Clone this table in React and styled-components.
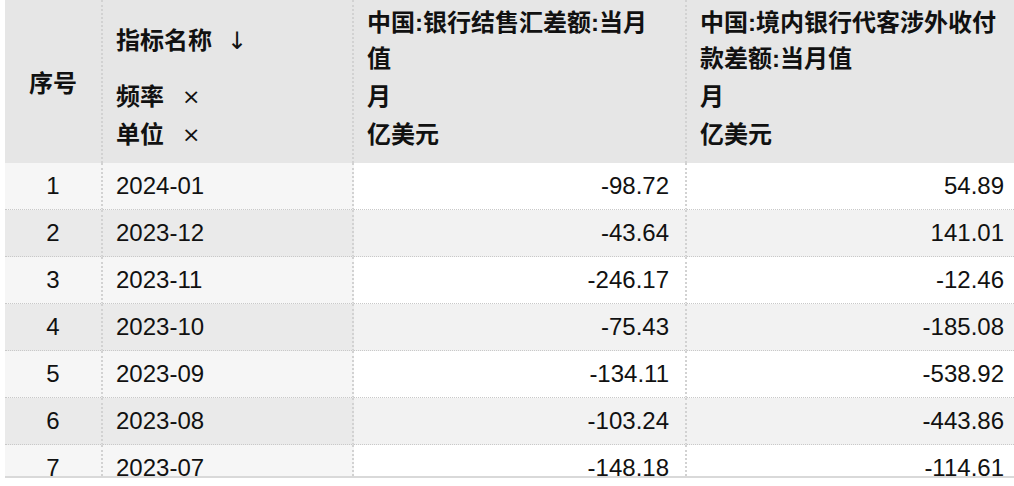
import React from 'react';
import styled, { createGlobalStyle } from 'styled-components';

const GlobalStyle = createGlobalStyle`
  body {
    margin: 0;
    background: #ffffff;
    font-family: 'Liberation Sans', 'Noto Sans CJK SC', sans-serif;
    color: #111111;
  }
`;

const Page = styled.div`
  padding-left: 5px;
  width: 1009px;
`;

const Viewport = styled.div`
  height: 476px;
  overflow: hidden;
  border-bottom: 2px solid #d9d9d9;
`;

const Grid = styled.div`
  display: grid;
  grid-template-columns: 98px 251px 333px 333px;
  width: 1015px;
`;

const HeadCell = styled.div`
  box-sizing: border-box;
  height: 163px;
  background: #e6e6e6;
  border-right: ${p => (p.$last ? 'none' : '2px dotted #d2d2d2')};
  padding: 4px 0 9px 13px;
  display: flex;
  flex-direction: column;
  font-size: 24px;
  font-weight: 700;
  color: #111;
`;

const IndexHead = styled(HeadCell)`
  padding: 0;
  align-items: center;
  justify-content: center;
`;

const NameBlock = styled.div`
  height: 74px;
  display: flex;
  align-items: center;
  line-height: 36px;
  max-width: 300px;
`;

const MetaRow = styled.div`
  height: 38px;
  line-height: 38px;
  display: flex;
  align-items: center;
`;

const Mark = styled.span`
  font-weight: 400;
  margin-left: ${p => p.$gap || 18}px;
  font-family: 'DejaVu Sans', 'Liberation Sans', sans-serif;
  font-size: ${p => p.$size || 22}px;
`;

const Cell = styled.div`
  box-sizing: border-box;
  height: 47px;
  display: flex;
  align-items: center;
  font-size: 24px;
  color: #111;
  border-bottom: 1px dotted #c9c9c9;
  border-right: ${p => (p.$last ? 'none' : '2px dotted #d2d2d2')};
  background: ${p =>
    p.$side ? (p.$even ? '#eaeaea' : '#f6f6f6') : p.$even ? '#f2f2f2' : '#ffffff'};
  justify-content: ${p => p.$align || 'flex-start'};
  padding: ${p => (p.$align === 'flex-end' ? '0 16px 0 0' : p.$align === 'center' ? '0' : '0 0 0 13px')};
`;

const rows = [
  ['2024-01', '-98.72', '54.89'],
  ['2023-12', '-43.64', '141.01'],
  ['2023-11', '-246.17', '-12.46'],
  ['2023-10', '-75.43', '-185.08'],
  ['2023-09', '-134.11', '-538.92'],
  ['2023-08', '-103.24', '-443.86'],
  ['2023-07', '-148.18', '-114.61'],
];

const series = [
  '中国:银行结售汇差额:当月值',
  '中国:境内银行代客涉外收付款差额:当月值',
];

export default function App() {
  return (
    <Page>
      <GlobalStyle />
      <Viewport>
        <Grid>
          <IndexHead>序号</IndexHead>
          <HeadCell>
            <NameBlock>
              指标名称<Mark $gap={15} $size={24}>↓</Mark>
            </NameBlock>
            <MetaRow>频率<Mark>×</Mark></MetaRow>
            <MetaRow>单位<Mark>×</Mark></MetaRow>
          </HeadCell>
          {series.map((name, i) => (
            <HeadCell key={name} $last={i === series.length - 1}>
              <NameBlock>{name}</NameBlock>
              <MetaRow>月</MetaRow>
              <MetaRow>亿美元</MetaRow>
            </HeadCell>
          ))}

          {rows.map(([date, a, b], i) => {
            const even = i % 2 === 1;
            return (
              <React.Fragment key={date}>
                <Cell $side $even={even} $align="center">{i + 1}</Cell>
                <Cell $side $even={even}>{date}</Cell>
                <Cell $even={even} $align="flex-end">{a}</Cell>
                <Cell $even={even} $align="flex-end" $last>{b}</Cell>
              </React.Fragment>
            );
          })}
        </Grid>
      </Viewport>
    </Page>
  );
}
